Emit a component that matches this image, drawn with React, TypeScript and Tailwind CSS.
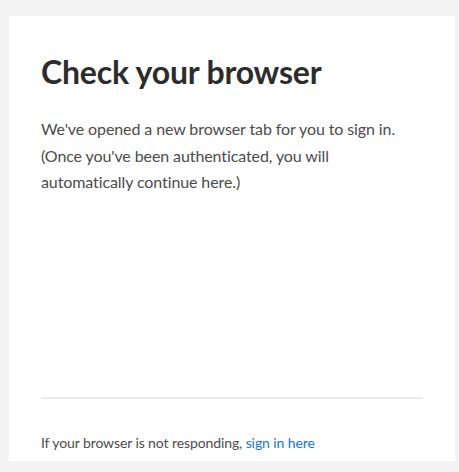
export default function App() {
  return (
    <div
      className="h-[472px] w-full bg-[#f3f3f3] pt-[16px] pr-[4px] pb-[11px] pl-[9px]"
      style={{ fontFamily: "Lato, 'Open Sans', sans-serif" }}
    >
      <div className="flex h-full flex-col bg-white px-[32px]">
        <h1 className="mt-[35px] text-[32px] font-bold leading-[41.6px] tracking-[-0.2px] text-[#2c2c2c]">
          Check your browser
        </h1>
        <p className="mt-[23.5px] text-[16px] leading-[26.5px] tracking-[-0.1px] text-[#4b4b4b]">
          We've opened a new browser tab for you to sign in.
          <br />
          (Once you've been authenticated, you will
          <br />
          automatically continue here.)
        </p>
        <div className="mt-auto h-[2px] bg-[#eaeaea]" />
        <p className="mt-[33.6px] mb-[8.4px] text-[14px] leading-[20px] tracking-[-0.1px] text-[#4b4b4b]">
          If your browser is not responding,{" "}
          <a href="#" className="text-[#1473e6]">
            sign in here
          </a>
        </p>
      </div>
    </div>
  );
}
